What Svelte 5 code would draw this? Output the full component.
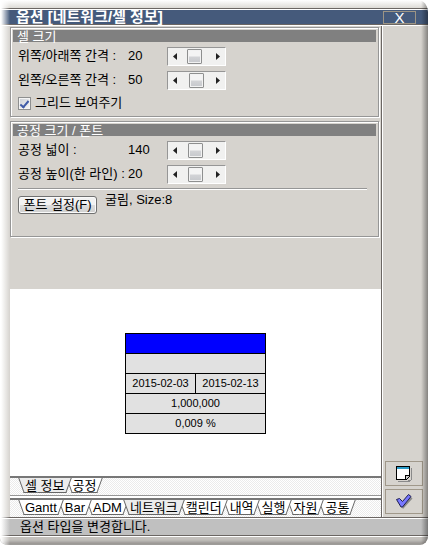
<script>
  let rowGap = $state(20);
  let columnGap = $state(50);
  let showGrid = $state(true);
  let boxWidth = $state(140);
  let boxHeight = $state(20);

  const sheets = ['셀 정보', '공정'];
  const pages = ['Gantt', 'Bar', 'ADM', '네트워크', '캘린더', '내역', '실행', '자원', '공통'];

  let activeSheet = $state('셀 정보');
  let activePage = $state('네트워크');
</script>

{#snippet scroller(id, value, max, update)}
  <div class="scroller">
    <button type="button" aria-label="감소" onclick={() => update(Math.max(0, value - 1))}>
      <svg width="4" height="7" viewBox="0 0 4 7"><path d="M4 0V7L0 3.5Z" /></svg>
    </button>
    <input {id} type="range" min="0" {max} {value} oninput={(e) => update(Number(e.currentTarget.value))} />
    <button type="button" aria-label="증가" onclick={() => update(Math.min(max, value + 1))}>
      <svg width="4" height="7" viewBox="0 0 4 7"><path d="M0 0V7L4 3.5Z" /></svg>
    </button>
  </div>
{/snippet}

{#snippet tabs(items, active, select)}
  <div class="tabs" role="tablist">
    {#each items as item, i}
      <!-- the active tab lies on top, then the tabs from left to right -->
      <button
        type="button"
        class="tab"
        class:active={item === active}
        role="tab"
        aria-selected={item === active}
        style:z-index={item === active ? items.length + 1 : items.length - i}
        onclick={() => select(item)}
      >
        <span>{item}</span>
      </button>
    {/each}
  </div>
{/snippet}

<div class="window">
  <header class="titlebar">
    <h1>옵션 [네트워크/셀 정보]</h1>
    <button type="button" class="close">X</button>
  </header>

  <div class="body">
    <main>
      <div class="settings">
        <section class="panel">
          <h2>셀 크기</h2>
          <div class="rows">
            <div class="row">
              <label for="row-gap">위쪽/아래쪽 간격 :</label>
              <output>{rowGap}</output>
              {@render scroller('row-gap', rowGap, 60, (v) => (rowGap = v))}
            </div>
            <div class="row">
              <label for="column-gap">왼쪽/오른쪽 간격 :</label>
              <output>{columnGap}</output>
              {@render scroller('column-gap', columnGap, 100, (v) => (columnGap = v))}
            </div>
            <label class="check">
              <input type="checkbox" bind:checked={showGrid} />
              <span>그리드 보여주기</span>
            </label>
          </div>
        </section>

        <section class="panel">
          <h2>공정 크기 / 폰트</h2>
          <div class="rows">
            <div class="row">
              <label for="box-width">공정 넓이 :</label>
              <output>{boxWidth}</output>
              {@render scroller('box-width', boxWidth, 350, (v) => (boxWidth = v))}
            </div>
            <div class="row">
              <label for="box-height">공정 높이(한 라인) :</label>
              <output>{boxHeight}</output>
              {@render scroller('box-height', boxHeight, 50, (v) => (boxHeight = v))}
            </div>
            <hr />
            <div class="font-row">
              <button type="button" class="font-button">폰트 설정(F)</button>
              <span>굴림, Size:8</span>
            </div>
          </div>
        </section>
      </div>

      <div class="preview">
        <table>
          <tbody>
            <tr><td class="bar" colspan="2"></td></tr>
            <tr><td colspan="2"></td></tr>
            <tr><td>2015-02-03</td><td>2015-02-13</td></tr>
            <tr><td colspan="2">1,000,000</td></tr>
            <tr><td colspan="2">0,009 %</td></tr>
          </tbody>
        </table>
      </div>

      {@render tabs(sheets, activeSheet, (t) => (activeSheet = t))}
      <div class="splitter"></div>
      {@render tabs(pages, activePage, (t) => (activePage = t))}
    </main>

    <aside>
      <button type="button" class="tool" aria-label="기본값">
        <svg width="16" height="16" viewBox="0 0 16 16" shape-rendering="crispEdges">
          <path d="M2 15H12V14H15V2H16V13L13 16H2Z" fill="#8a8a8a" />
          <path d="M0.5 0.5H13.5V10.5L10.5 13.5H0.5Z" fill="#fff" stroke="#000" />
          <path d="M1 1H13V3H1Z" fill="#2c9cc8" />
          <path d="M9.5 13V9.5H13" fill="none" stroke="#000" />
          <path d="M10 13V10H13L10 13Z" fill="#ccc" />
        </svg>
      </button>
      <button type="button" class="tool" aria-label="적용">
        <svg width="17" height="15" viewBox="0 0 17 15">
          <path d="M3 8L7 15L16.5 4.5L15 3L7 12Z" fill="#8a8a8a" />
          <path d="M0.5 5.5L3.5 4.5L6.5 7.5L12.5 0.5L15 2.5L6.5 13H5Z" fill="#7878ff" stroke="#1c1c50" />
        </svg>
      </button>
    </aside>
  </div>

  <footer>옵션 타입을 변경합니다.</footer>
</div>

<style>
  :global(body) {
    background: #fff;
  }

  .window {
    position: relative;
    box-sizing: border-box;
    display: flex;
    flex-direction: column;
    min-height: 100vh;
    padding-top: 8px;
    border-right: 2px solid #fff;
    border-bottom: 1px solid #fff;
    border-radius: 0 12px 10px 8px;
    overflow: hidden;
    background: linear-gradient(#fff, #dddbd6 8px, #d6d3ce 9px);
    color: #000;
    font: 13px/16px 'Liberation Sans', 'Noto Sans CJK KR', sans-serif;
  }

  /* Bevelled left and right edges of the frame */
  .window::before,
  .window::after {
    content: '';
    position: absolute;
    z-index: 20;
    top: 0;
    bottom: 0;
    pointer-events: none;
  }

  .window::before {
    left: 0;
    width: 10px;
    background: linear-gradient(to right, #fff 1px, rgba(255, 255, 255, 0));
  }

  .window::after {
    right: 0;
    width: 7px;
    background: linear-gradient(to right, rgba(0, 0, 0, 0), rgba(0, 0, 0, 0.38));
  }

  button {
    font: inherit;
    color: inherit;
    padding: 0;
    margin: 0;
  }

  h1,
  h2 {
    margin: 0;
  }

  .titlebar {
    display: flex;
    align-items: center;
    justify-content: space-between;
    height: 14px;
    padding: 1px 12px 0 16px;
    border-top: 1px solid #6b6663;
    border-bottom: 1px solid #6b6663;
    box-shadow: inset 0 1px 0 #fff, 0 1px 0 #fff;
    background: #455a7b;
    color: #fff;
  }

  h1 {
    font-size: 15px;
    line-height: 16px;
    font-weight: 700;
  }

  .close {
    width: 33px;
    height: 13px;
    border: 1px solid #9c9484;
    background: none;
    font-size: 15px;
    line-height: 11px;
  }

  .body {
    flex: 1;
    display: flex;
    padding: 1px 5px 0 10px;
  }

  main {
    flex: 1;
    min-width: 0;
    display: flex;
    flex-direction: column;
    border-right: 1px solid #6b6663;
  }

  .settings {
    display: flex;
    flex-direction: column;
    gap: 4px;
    padding: 1px 2px 52px 0;
  }

  .panel {
    padding: 2px;
    border: 1px solid #969696;
    box-shadow: 1px 1px 0 #fff, inset 1px 1px 0 #fff;
  }

  h2 {
    height: 12px;
    padding-left: 4px;
    background: #808080;
    color: #fff;
    font-size: 13px;
    font-weight: 400;
    line-height: 14px;
  }

  .rows {
    padding: 2px 0 0 5px;
  }

  .row {
    display: grid;
    grid-template-columns: 110px 39px auto;
    justify-content: start;
    align-items: center;
    height: 24px;
    white-space: nowrap;
  }

  .scroller {
    display: flex;
    box-sizing: border-box;
    width: 59px;
    height: 19px;
    border: 1px solid;
    border-color: #969696 #fff #fff #969696;
    background: #f1f1f0;
  }

  .scroller button {
    display: flex;
    align-items: center;
    justify-content: center;
    width: 14px;
    border: 0;
    background: none;
  }

  .scroller path {
    fill: #222;
  }

  .scroller input {
    appearance: none;
    flex: 1;
    width: 0;
    min-width: 0;
    margin: 0;
    background: none;
  }

  .scroller input::-webkit-slider-thumb {
    appearance: none;
    box-sizing: border-box;
    width: 15px;
    height: 15px;
    border: 1px solid #8e8f8f;
    border-radius: 1px;
    background: linear-gradient(#f4f4f4 45%, #d2d3d6 55%, #c6c8cc);
    box-shadow: inset 0 0 0 1px #f2f2f2;
  }

  .check {
    display: flex;
    align-items: center;
    gap: 4px;
    height: 22px;
  }

  .check input {
    appearance: none;
    display: grid;
    place-items: center;
    width: 13px;
    height: 13px;
    margin: 0;
    border: 1px solid #8e8f8f;
    background: linear-gradient(135deg, #cbcfd5, #f6f6f6);
    box-shadow: inset 0 0 0 1px #f4f4f4;
  }

  .check input:checked::before {
    content: '';
    width: 3px;
    height: 7px;
    border: solid #3f5ba8;
    border-width: 0 2px 2px 0;
    transform: rotate(40deg);
  }

  hr {
    margin: 2px 9px 0 0;
    border: 0;
    border-top: 1px solid #969696;
    border-bottom: 1px solid #fff;
  }

  .font-row {
    display: flex;
    align-items: flex-start;
    gap: 8px;
    height: 44px;
  }

  .font-row span {
    padding-top: 2px;
  }

  .font-button {
    width: 79px;
    height: 18px;
    margin-top: 6px;
    border: 1px solid #707070;
    border-radius: 3px;
    background: linear-gradient(#f2f2f2 50%, #dddddd 50%, #cfcfcf);
    box-shadow: inset 0 0 0 1px #fafafa;
    line-height: 16px;
    white-space: nowrap;
  }

  .preview {
    flex: 1;
    display: flex;
    align-items: center;
    justify-content: center;
    padding-top: 2px;
    background: #fff;
  }

  table {
    border-collapse: collapse;
    width: 141px;
    table-layout: fixed;
    font-size: 11px;
    line-height: 19px;
  }

  td {
    height: 19px;
    padding: 0;
    border: 1px solid #000;
    background: #e1e1e1;
    text-align: center;
  }

  td.bar {
    background: #00f;
  }

  .tabs {
    display: flex;
    height: 17px;
    padding-left: 11px;
    border-top: 2px solid #777;
    background: repeating-conic-gradient(#fff 0 25%, #ebebeb 0 50%) 0 0 / 2px 2px;
  }

  .splitter {
    height: 2px;
    border-top: 1px solid #969696;
    background: #fff;
  }

  .tab {
    position: relative;
    display: block;
    height: 15px;
    padding: 0 4px;
    border: 0;
    background: none;
    line-height: 14px;
    white-space: nowrap;
  }

  .tab span {
    position: relative;
    z-index: 2;
  }

  /* Each half of the tab leans inwards, together they form the trapezoid */
  .tab::before,
  .tab::after {
    content: '';
    position: absolute;
    box-sizing: border-box;
    top: 0;
    bottom: 0;
    border-bottom: 1px solid #666;
    background: #fff;
  }

  .tab::before {
    left: 0;
    right: 40%;
    border-left: 1px solid #666;
    transform: skewX(20deg);
  }

  .tab::after {
    left: 40%;
    right: 0;
    border-right: 1px solid #666;
    transform: skewX(-20deg);
  }

  .tab.active::before,
  .tab.active::after {
    background: #ececec;
  }

  aside {
    display: flex;
    flex-direction: column;
    justify-content: flex-end;
    gap: 3px;
    padding: 0 0 3px 2px;
    border-left: 1px solid #fff;
  }

  .tool {
    display: flex;
    align-items: center;
    justify-content: center;
    width: 38px;
    height: 25px;
    border: 1px solid #a0988a;
    background: none;
  }

  footer {
    height: 15px;
    padding: 1px 20px;
    margin-bottom: 9px;
    border-top: 1px solid #6b6663;
    border-bottom: 1px solid #6b6663;
    background: #c0c0c0;
    box-shadow: inset 0 1px 0 #fff, 0 1px 0 #fff, 0 6px 3px #c4c1bd, 0 10px 3px #918f8c;
    line-height: 16px;
  }
</style>
